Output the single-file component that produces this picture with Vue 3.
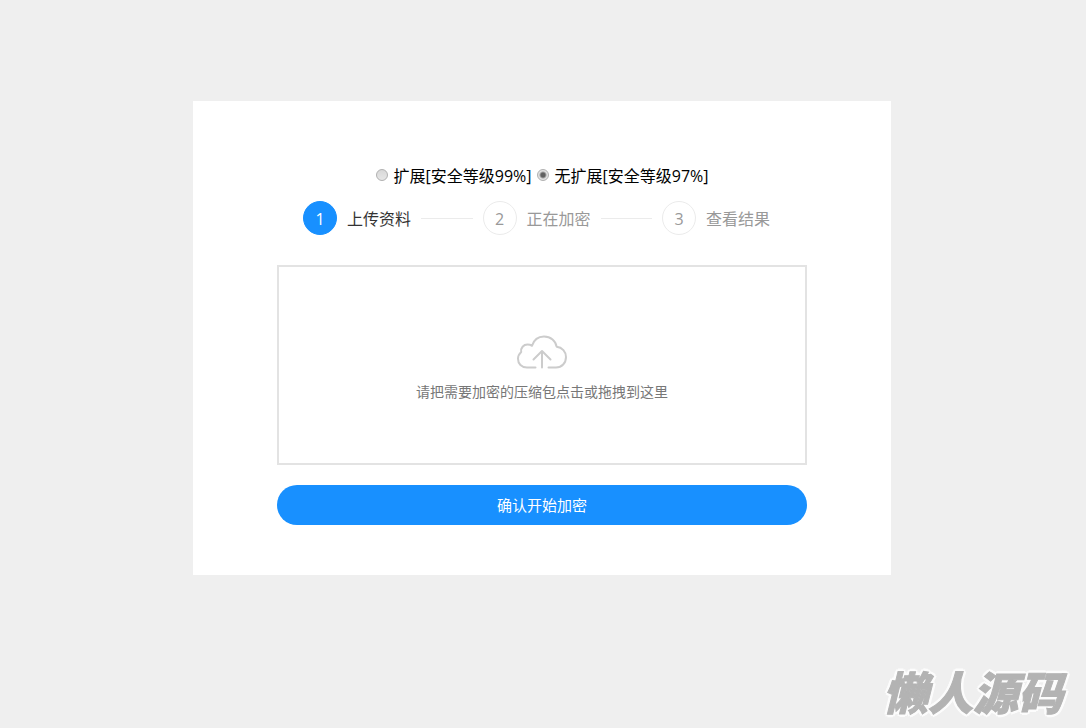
<script setup>
import { ref } from 'vue'

const mode = ref('plain')
const modes = [
  { value: 'extended', label: '扩展[安全等级99%]' },
  { value: 'plain', label: '无扩展[安全等级97%]' },
]
const current = ref(1)
const steps = ['上传资料', '正在加密', '查看结果']
</script>

<template>
  <div class="page">
    <main class="card">
      <div class="modes">
        <label v-for="m in modes" :key="m.value" class="mode">
          <input v-model="mode" type="radio" name="mode" :value="m.value" />
          <span class="text">{{ m.label }}</span>
        </label>
      </div>

      <ol class="steps">
        <template v-for="(title, i) in steps" :key="title">
          <li class="step" :class="{ active: current === i + 1 }">
            <span class="num">{{ i + 1 }}</span>
            <span class="text">{{ title }}</span>
          </li>
          <li v-if="i < steps.length - 1" class="line" aria-hidden="true"></li>
        </template>
      </ol>

      <button type="button" class="drop">
        <svg class="cloud" width="52" height="36" viewBox="0 0 52 36" aria-hidden="true">
          <path d="M19.5 33.5H11C5.500 33.500 2 29.800 2 24.800C2 21.200 3.500 19.500 5.200 18C4.500 13.800 7.500 10.600 11.500 10.600C13.500 10.600 14.800 11 16 11.800C17.800 6 22.500 2.500 28 2.500C34.800 2.500 39.800 7 40.600 12.700C46.200 13.200 50 17.700 50 23C50 29 45.800 33.500 40 33.500H32.500" />
          <path d="M26 33.500V17M17.500 25.500L26 17L34.500 25.500" />
        </svg>
        <span>请把需要加密的压缩包点击或拖拽到这里</span>
      </button>

      <button type="button" class="submit">确认开始加密</button>
    </main>
    <div class="brand">懒人源码</div>
  </div>
</template>

<style>
body {
  background: #efefef;
}
</style>

<style scoped>
.page {
  box-sizing: border-box;
  min-height: 100vh;
  padding: 101px 26px 40px 24px;
  font-family: "Open Sans", "Noto Sans CJK SC", sans-serif;
  font-size: 16px;
  line-height: 24px;
  color: #000;
}

.card {
  box-sizing: border-box;
  max-width: 698px;
  margin: 0 auto;
  padding: 61px 84px 50px;
  background: #fff;
}

.modes {
  display: flex;
  justify-content: center;
  gap: 5px;
}

.mode {
  display: flex;
  align-items: center;
  gap: 6px;
  white-space: nowrap;
}

.text {
  padding-top: 2px;
}

.mode input {
  appearance: none;
  box-sizing: border-box;
  flex: none;
  width: 12px;
  height: 12px;
  margin: 0;
  border: 1px solid #b0b0b0;
  border-radius: 50%;
  background: linear-gradient(#d8d8d8, #e6e6e6);
}

.mode input:checked {
  background: radial-gradient(circle, #606060 0 2px, #e2e2e2 4px);
}

.steps {
  display: flex;
  align-items: center;
  gap: 10px;
  margin: 13px 0 30px;
  padding: 0 37px 0 26px;
  list-style: none;
}

.step {
  display: flex;
  align-items: center;
  gap: 10px;
  color: #999;
  white-space: nowrap;
}

.num {
  box-sizing: border-box;
  width: 34px;
  height: 34px;
  border: 1px solid #ebebeb;
  border-radius: 50%;
  line-height: 34px;
  text-align: center;
}

.active {
  color: #333;
}

.active .num {
  border-color: #1890ff;
  background: #1890ff;
  color: #fff;
}

.line {
  flex: 1;
  height: 1px;
  background: #ebebeb;
}

.drop {
  box-sizing: border-box;
  display: flex;
  flex-direction: column;
  align-items: center;
  justify-content: center;
  gap: 10px;
  width: 100%;
  min-height: 200px;
  padding: 8px 0 0;
  border: 2px solid #e3e3e3;
  background: #fff;
  color: #777;
  font: inherit;
  font-size: 14px;
  line-height: 24px;
  cursor: pointer;
}

.cloud {
  fill: none;
  stroke: #ccc;
  stroke-width: 2;
  stroke-linecap: round;
  stroke-linejoin: round;
}

.submit {
  display: block;
  width: 100%;
  height: 40px;
  margin-top: 20px;
  padding: 0;
  border: 0;
  border-radius: 20px;
  background: #1890ff;
  color: #fff;
  font: inherit;
  font-size: 15px;
  cursor: pointer;
}

.brand {
  position: fixed;
  right: 23px;
  bottom: 9px;
  color: #b3b3b3;
  font-family: "Noto Sans CJK SC", sans-serif;
  font-size: 45px;
  font-style: italic;
  font-weight: 900;
  line-height: 56px;
  -webkit-text-stroke: 1px #b3b3b3;
  text-shadow: 3px 0 #fcfcfc, -3px 0 #fcfcfc, 0 3px #fcfcfc, 0 -3px #fcfcfc,
    2px 2px #fcfcfc, -2px 2px #fcfcfc, 2px -2px #fcfcfc, -2px -2px #fcfcfc;
}
</style>
